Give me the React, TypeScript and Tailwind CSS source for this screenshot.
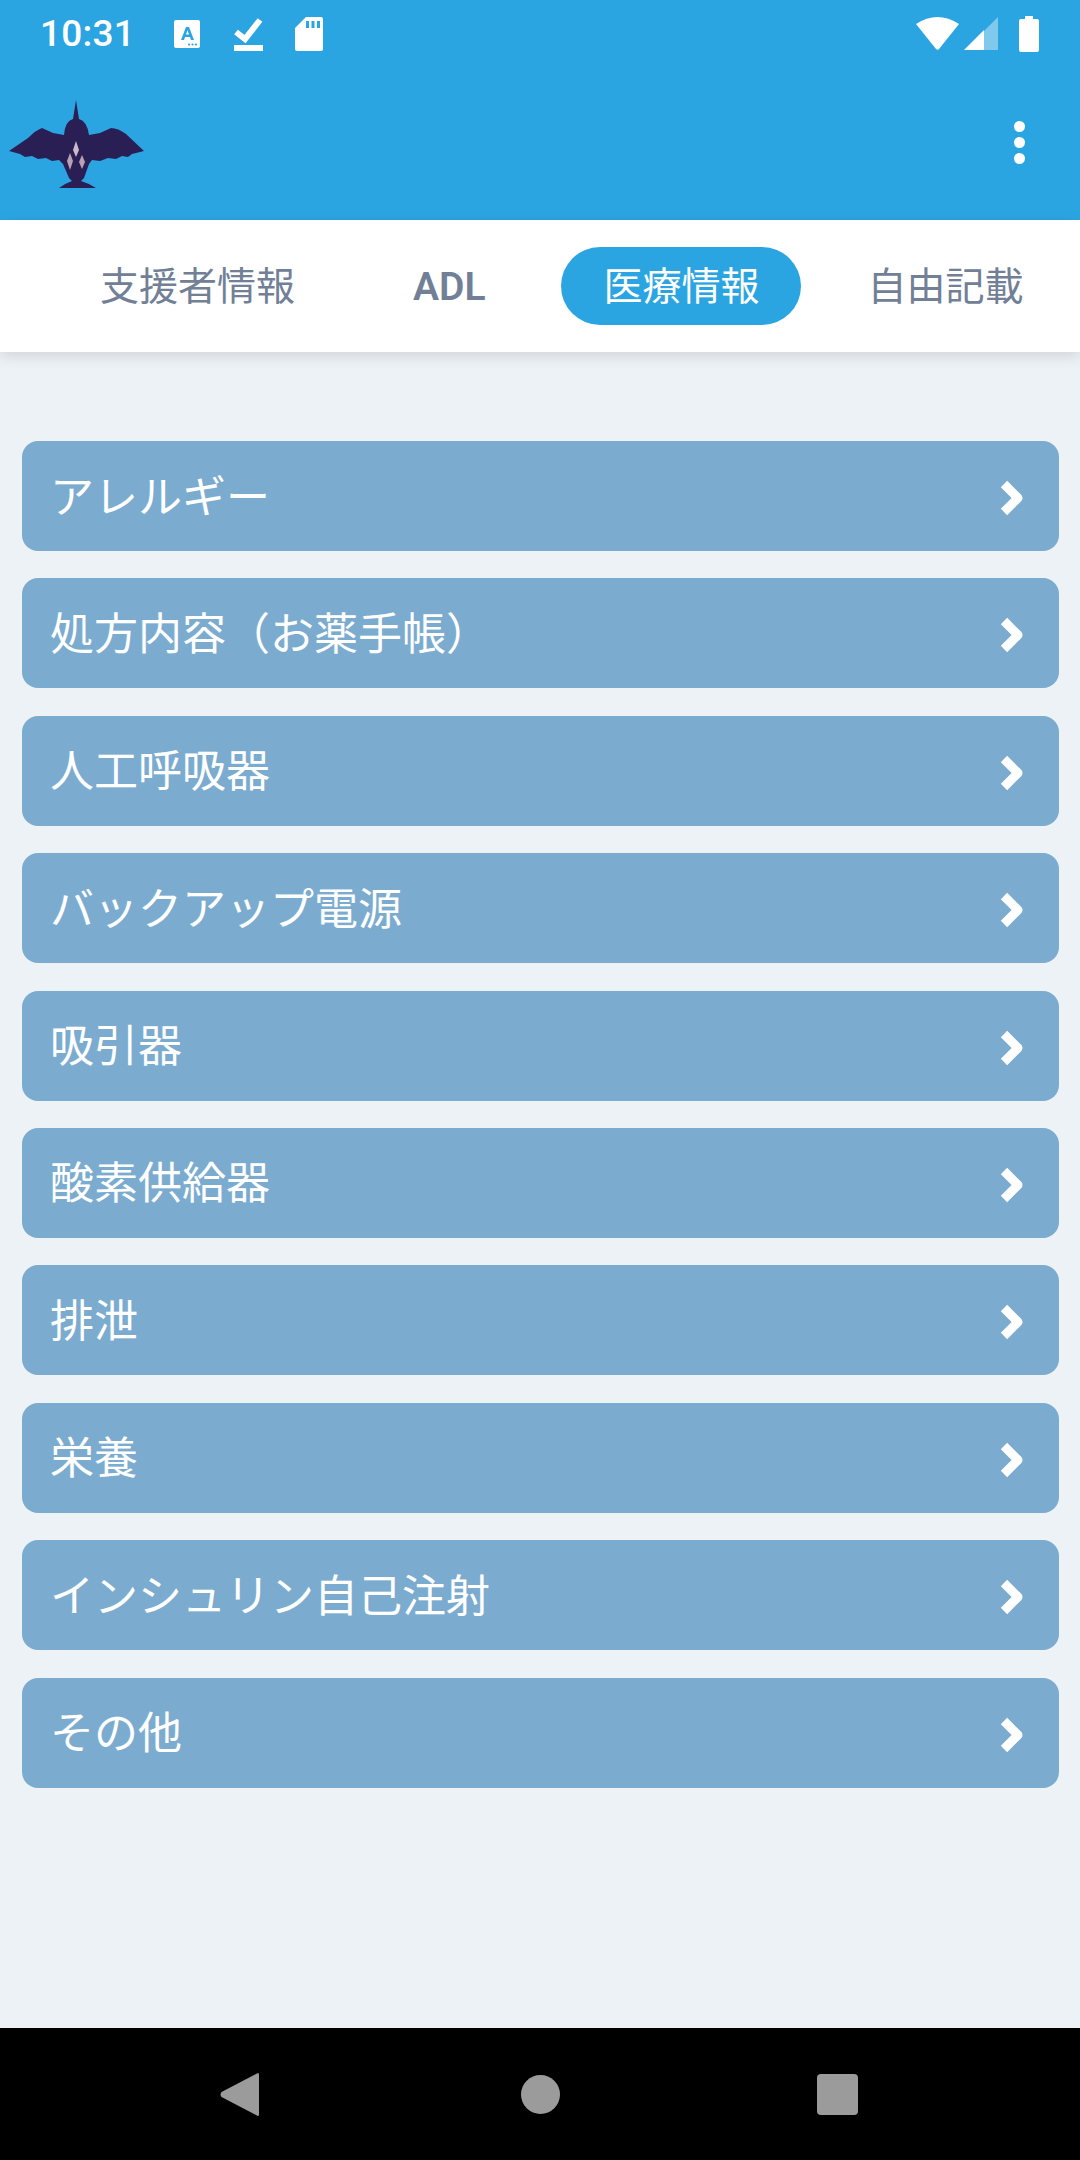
import React from 'react';

const tabs = [
  { label: '支援者情報', pad: 'px-[43px]' },
  { label: 'ADL', pad: 'px-[43px] font-semibold' },
  { label: '医療情報', pad: 'pl-[43px] pr-[41px] bg-[#2ba5e1] !text-white rounded-[39px]' },
  { label: '自由記載', pad: 'px-[35px]' },
];

const items = [
  'アレルギー',
  '処方内容（お薬手帳）',
  '人工呼吸器',
  'バックアップ電源',
  '吸引器',
  '酸素供給器',
  '排泄',
  '栄養',
  'インシュリン自己注射',
  'その他',
];

const StatusBar = () => (
  <div className="h-[67px] flex items-center pl-[40px] pr-[41px] text-white">
    <span className="text-[37px] leading-none font-medium tracking-[0.2px] font-['Roboto',sans-serif]">10:31</span>
    {/* keyboard */}
    <svg className="ml-[39px]" width="26" height="28" viewBox="0 0 26 28">
      <rect width="26" height="28" rx="2" fill="white" />
      <path d="M7 20 L12 7 L15 7 L20 20 L17 20 L16 17 L11 17 L10 20 Z M12 14.5 L15 14.5 L13.5 10 Z" fill="#2ba5e1" fillRule="evenodd" />
      <circle cx="15" cy="24.5" r="1.1" fill="#2ba5e1" />
      <circle cx="18.5" cy="24.5" r="1.1" fill="#2ba5e1" />
      <circle cx="22" cy="24.5" r="1.1" fill="#2ba5e1" />
    </svg>
    {/* check */}
    <svg className="ml-[34px]" width="29" height="34" viewBox="0 0 29 34">
      <path d="M2 15 L11 22 L26 3" fill="none" stroke="white" strokeWidth="6" />
      <rect y="28" width="29" height="6" fill="white" />
    </svg>
    {/* sd card */}
    <svg className="ml-[32px]" width="28" height="34" viewBox="0 0 28 34">
      <path d="M11 0 H26 a2 2 0 0 1 2 2 V32 a2 2 0 0 1 -2 2 H2 a2 2 0 0 1 -2 -2 V11 Z" fill="white" />
      <rect x="11" y="4" width="3" height="7" fill="#2ba5e1" />
      <rect x="16.5" y="4" width="3" height="7" fill="#2ba5e1" />
      <rect x="22" y="4" width="3" height="7" fill="#2ba5e1" />
    </svg>
    <div className="flex-1" />
    {/* wifi */}
    <svg width="43" height="33" viewBox="0 0 43 33">
      <path d="M0 7 Q21.5 -7 43 7 L23 32 Q21.5 33.5 20 32 Z" fill="white" />
    </svg>
    {/* signal */}
    <svg className="ml-[5px]" width="34" height="33" viewBox="0 0 34 33">
      <path d="M20 14 L34 0 V33 H20 Z" fill="white" fillOpacity="0.4" />
      <path d="M0 33 L20 13 V33 Z" fill="white" />
    </svg>
    {/* battery */}
    <svg className="ml-[21px]" width="20" height="36" viewBox="0 0 20 36">
      <path d="M6 0 H14 V3 H18 a2 2 0 0 1 2 2 V34 a2 2 0 0 1 -2 2 H2 a2 2 0 0 1 -2 -2 V5 a2 2 0 0 1 2 -2 H6 Z" fill="white" />
    </svg>
  </div>
);

const BirdLogo = () => (
  <svg width="137" height="90" viewBox="0 0 137 90" className="blur-[0.6px]">
    <path
      fill="#2a1f55"
      d="M68 0 L71 19 Q79 21 81 35 L92 33 L103 28 Q110 28 118 34 L136 51 L124 54 L120 57 L114 56 L108 59 L100 58 L92 61 L84 60 L81 64 L76 78 L73 81 Q80 83 88 88 L51 88 Q58 83 64 81 L61 78 L55 64 L51 60 L44 61 L38 58 L30 59 L24 56 L17 57 L12 54 L1 51 L20 38 Q28 30 34 28 L45 33 L56 35 Q57 21 65 19 Z"
    />
    <path fill="#cdb9c9" d="M68 41 L71 50 L68 57 L65 50 Z" />
    <path fill="#b9a1b4" d="M62 53 L65 61 L62 70 L59 61 Z" />
    <path fill="#b9a1b4" d="M74 55 L77 62 L74 69 L71 62 Z" />
  </svg>
);

const Header = () => (
  <div className="bg-[#2ba5e1] h-[220px] flex flex-col">
    <StatusBar />
    <div className="flex-1 flex items-start pl-[8px] pr-[55px] pt-[33px] justify-between">
      <BirdLogo />
      <div className="flex flex-col gap-[5px] pt-[21px]">
        <span className="w-[11px] h-[11px] rounded-full bg-white" />
        <span className="w-[11px] h-[11px] rounded-full bg-white" />
        <span className="w-[11px] h-[11px] rounded-full bg-white" />
      </div>
    </div>
  </div>
);

const Tabs = () => (
  <div className="relative z-10 h-[132px] bg-white shadow-[0_4px_14px_rgba(0,0,0,0.12)] flex items-center pl-[57px] gap-[32px] overflow-hidden whitespace-nowrap">
    {tabs.map((t) => (
      <div key={t.label} className={`h-[78px] pt-[3px] flex items-center shrink-0 text-[39px] text-[#718096] ${t.pad}`}>
        {t.label}
      </div>
    ))}
  </div>
);

const Row = ({ label }: { label: string }) => (
  <div className="h-[110px] rounded-[16px] bg-[#7bacd0] flex items-center justify-between pl-[28px] pr-[34px] text-white">
    <span className="text-[44px] leading-none pt-[3px]">{label}</span>
    <svg width="26" height="38" viewBox="0 0 26 38" className="mt-[4px] blur-[0.5px]">
      <path d="M5 5 L19 19 L5 33" fill="none" stroke="white" strokeWidth="9" strokeLinejoin="round" />
    </svg>
  </div>
);

const NavBar = () => (
  <div className="h-[132px] bg-black flex items-center pl-[220px]">
    <svg width="39" height="45" viewBox="0 0 39 45">
      <path d="M37 1.5 Q39 0 39 3 V42 Q39 45 37 43.5 L1.5 25 Q-0.5 22.5 1.5 20 Z" fill="#9b9b9b" />
    </svg>
    <span className="ml-[262px] w-[39px] h-[39px] rounded-full bg-[#9b9b9b]" />
    <span className="ml-[257px] w-[41px] h-[41px] rounded-[4px] bg-[#9b9b9b]" />
  </div>
);

export default function App() {
  return (
    <div className="w-[1080px] h-[2160px] flex flex-col bg-[#edf2f7] overflow-hidden font-['Roboto','Noto_Sans_CJK_JP',sans-serif]">
      <Header />
      <Tabs />
      <main className="flex-1 flex flex-col gap-[27.4px] pt-[89px] pl-[22px] pr-[21px]">
        {items.map((label) => (
          <Row key={label} label={label} />
        ))}
      </main>
      <NavBar />
    </div>
  );
}
